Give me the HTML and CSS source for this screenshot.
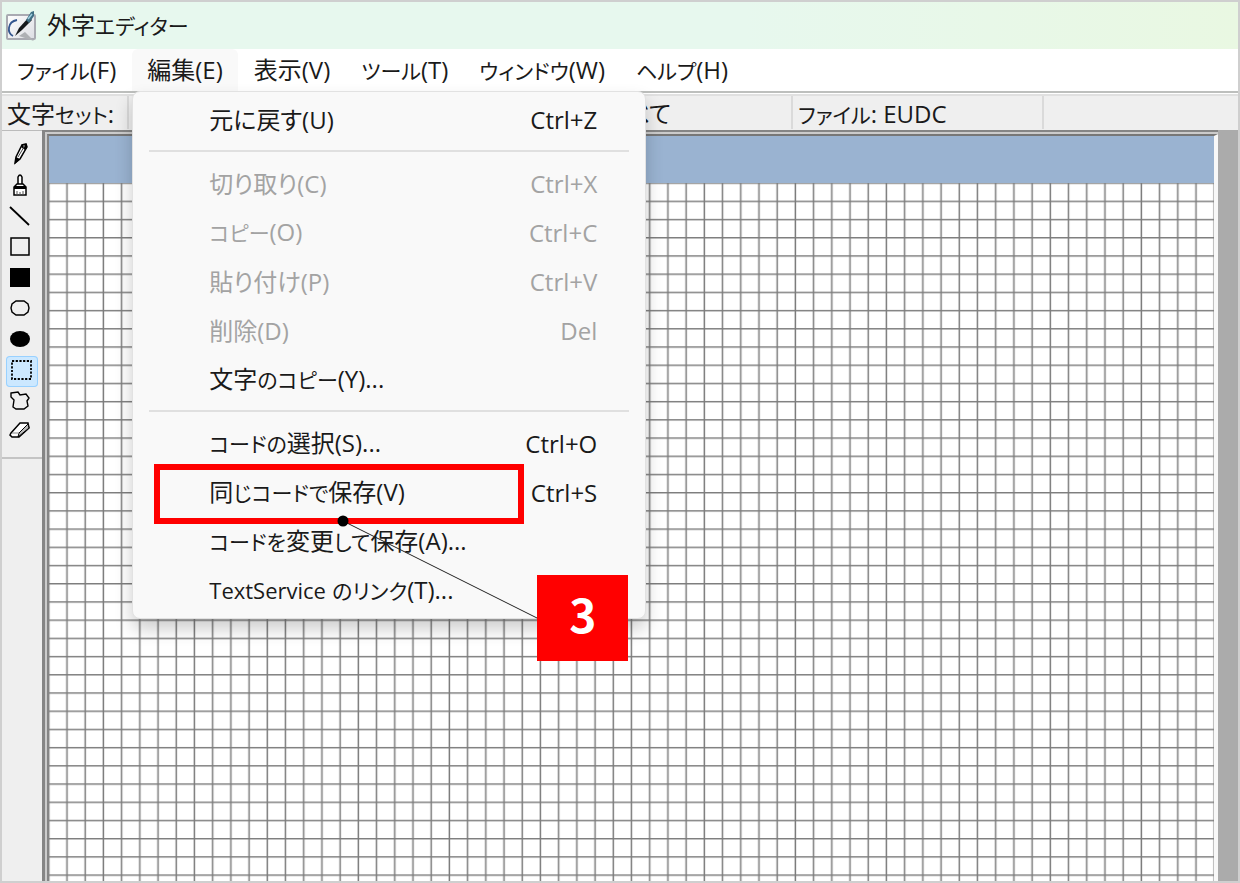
FILE: index.html
```
<!DOCTYPE html>
<html lang="ja">
<head>
    <meta charset="UTF-8">
    <meta name="viewport" content="width=device-width, initial-scale=1.0">
    <title>外字エディター</title>
    <link rel="stylesheet" href="styles.css">
</head>
<body>
    <div class="window">
        <header class="title-bar">
            <svg class="app-icon" width="32" height="32" viewBox="0 0 32 32">
                <defs>
                    <linearGradient id="paper" x1="0" y1="0" x2="1" y2="1">
                        <stop offset="0" stop-color="#ffffff"/>
                        <stop offset="1" stop-color="#dcdde3"/>
                    </linearGradient>
                </defs>
                <rect x="2" y="5" width="28" height="24" rx="1" fill="url(#paper)" stroke="#a9aab2" stroke-width="2"/>
                <path d="M12 10C2 12 2 23 8 26" fill="none" stroke="#34568f" stroke-width="1.8"/>
                <path d="M14 26L29 31L20 22Z" fill="#aeb0b4"/>
                <path d="M10 26L14 18L24 7L27 10L17 20Z" fill="#16191c"/>
                <path d="M21 10L26 2L29 1L29 6L24 13Z" fill="#3f6f83"/>
                <path d="M23 9L27 4" stroke="#9fd0e0" stroke-width="1.5"/>
            </svg>
            <h1>外字<span class="kana">エディター</span></h1>
        </header>

        <nav class="menu-bar">
            <button type="button"><span class="kana">ファイル</span>(F)</button>
            <div class="menu-holder">
                <button type="button" class="open" aria-expanded="true">編集(E)</button>
                <div class="menu">
                    <button type="button"><span>元に戻す(U)</span><kbd>Ctrl+Z</kbd></button>
                    <hr>
                    <button type="button" disabled><span>切り取り(C)</span><kbd>Ctrl+X</kbd></button>
                    <button type="button" disabled><span><span class="kana">コピー</span>(O)</span><kbd>Ctrl+C</kbd></button>
                    <button type="button" disabled><span>貼り付け(P)</span><kbd>Ctrl+V</kbd></button>
                    <button type="button" disabled><span>削除(D)</span><kbd>Del</kbd></button>
                    <button type="button"><span>文字<span class="kana">のコピー</span>(Y)...</span></button>
                    <hr>
                    <button type="button"><span><span class="kana">コードの</span>選択(S)...</span><kbd>Ctrl+O</kbd></button>
                    <button type="button"><span>同<span class="kana">じコードで</span>保存(V)</span><kbd>Ctrl+S</kbd></button>
                    <button type="button"><span><span class="kana">コードを</span>変更<span class="kana">して</span>保存(A)...</span></button>
                    <button type="button"><span><span class="latin">TextService</span> <span class="kana">のリンク</span>(T)...</span></button>
                    <div class="highlight"></div>
                    <svg class="leader" width="202" height="106" viewBox="0 0 202 106">
                        <path d="M6 6L202 104" stroke="#222" stroke-width="1"/>
                        <circle cx="6" cy="6" r="5.5" fill="#000"/>
                    </svg>
                    <div class="step">3</div>
                </div>
            </div>
            <button type="button">表示(V)</button>
            <button type="button"><span class="kana">ツール</span>(T)</button>
            <button type="button"><span class="kana">ウィンドウ</span>(W)</button>
            <button type="button"><span class="kana">ヘルプ</span>(H)</button>
        </nav>

        <div class="info-bar">
            <div class="cell charset">文字<span class="kana">セット</span>:</div>
            <div class="cell code"></div>
            <div class="cell font">すべて</div>
            <div class="cell file"><span class="kana">ファイル</span>: EUDC</div>
        </div>

        <main class="workspace">
            <div class="tools">
                <button type="button" aria-label="鉛筆">
                    <svg viewBox="0 0 32 31">
                        <path d="M9 24L10 18L16 6L20 5L21 8L14 20Z" fill="#fff" stroke="#000" stroke-width="1.5"/>
                        <path d="M9 25L10 18L14 20ZM16 5H21V9L19 11L15 8Z" fill="#000"/>
                        <path d="M18 8L12 18" stroke="#444"/>
                        <path d="M17 7H19" stroke="#aaa"/>
                    </svg>
                </button>
                <button type="button" aria-label="ブラシ">
                    <svg viewBox="0 0 32 31">
                        <path d="M12 15V7Q14 3 16 7V15" fill="#fff" stroke="#000" stroke-width="1.5"/>
                        <path d="M8 25V17L11 14H17L20 17V25Z" fill="#fff" stroke="#000" stroke-width="1.5"/>
                        <path d="M8 16H20V19H8Z"/>
                        <path d="M11 25V21M14 25V22M17 25V21" stroke="#555"/>
                    </svg>
                </button>
                <button type="button" aria-label="直線">
                    <svg viewBox="0 0 32 31"><path d="M4 6L23 24" stroke="#000" stroke-width="1.8"/></svg>
                </button>
                <button type="button" aria-label="四角形">
                    <svg viewBox="0 0 32 31"><rect x="5" y="6" width="18" height="17" fill="none" stroke="#000" stroke-width="1.5"/></svg>
                </button>
                <button type="button" aria-label="塗りつぶし四角形">
                    <svg viewBox="0 0 32 31"><rect x="4" y="5" width="20" height="19"/></svg>
                </button>
                <button type="button" aria-label="円">
                    <svg viewBox="0 0 32 31"><path d="M10 7H18L22 10L23 14L22 18L18 21H10L6 18L5 14L6 10Z" fill="none" stroke="#000" stroke-width="1.4"/></svg>
                </button>
                <button type="button" aria-label="塗りつぶし円">
                    <svg viewBox="0 0 32 31"><ellipse cx="14" cy="14" rx="10" ry="8"/></svg>
                </button>
                <button type="button" class="selected" aria-label="四角形選択" aria-pressed="true">
                    <svg viewBox="0 0 32 31"><rect x="6" y="5" width="19" height="18" fill="none" stroke="#000" stroke-width="1.8" stroke-dasharray="2.2 1.5"/></svg>
                </button>
                <button type="button" aria-label="自由選択">
                    <svg viewBox="0 0 32 31"><path d="M5 6L12 5L14 8L20 7L23 11L21 14L22 19L18 22H10L7 20L8 13L5 10Z" fill="none" stroke="#000" stroke-width="1.4"/></svg>
                </button>
                <button type="button" aria-label="消しゴム">
                    <svg viewBox="0 0 32 31">
                        <path d="M5 15L14 5H22L23 10L13 19H6L4 17Z" fill="#fff" stroke="#000" stroke-width="1.5"/>
                        <path d="M22 6L13 15L12 19L23 10Z" fill="#bbb" stroke="#000" stroke-width="1"/>
                        <path d="M6 15H13" stroke="#888"/>
                    </svg>
                </button>
            </div>
            <div class="editor">
                <div class="glyph-window">
                    <div class="glyph-title"></div>
                    <svg class="grid">
                        <defs>
                            <pattern id="cell" x="9" y="9" width="18.21" height="18.21" patternUnits="userSpaceOnUse">
                                <path d="M9 0V18.21M0 9.4H18.21" stroke="#7c7c7c" stroke-width="1.5"/>
                            </pattern>
                        </defs>
                        <rect width="100%" height="100%" fill="url(#cell)"/>
                    </svg>
                </div>
            </div>
        </main>
    </div>
</body>
</html>
```
FILE: styles.css
```
* {
    box-sizing: border-box;
}
body {
    margin: 0;
    font-family: "Open Sans", "Noto Sans CJK JP", sans-serif;
    font-size: 24px;
    line-height: 32px;
    font-feature-settings: "palt";
    color: #1a1a1a;
    overflow: hidden;
}
button {
    font: inherit;
    font-feature-settings: inherit;
    color: inherit;
    background: none;
    border: none;
    padding: 0;
    white-space: nowrap;
}
.kana {
    font-size: 21px;
}
.latin {
    font-size: 22px;
}
.window {
    display: flex;
    flex-direction: column;
    height: 100vh;
    border: 2px solid #cfcfcf;
    background-color: #efefef;
}
.title-bar {
    display: flex;
    align-items: center;
    gap: 10px;
    height: 47px;
    padding: 0 3px;
    background: linear-gradient(90deg, #e7f8ee 60%, #e9f8e2);
}
.title-bar h1 {
    margin: 0;
    font-size: 24px;
    font-weight: normal;
}
.menu-bar {
    display: flex;
    gap: 1px;
    height: 42px;
    background-color: #fff;
}
.menu-bar > button, .menu-holder > button {
    height: 42px;
    padding: 0 15px;
}
.menu-holder {
    position: relative;
}
.menu-holder > .open {
    background-color: #f9f9f9;
    border-radius: 6px 6px 0 0;
}
.menu {
    position: absolute;
    top: 42px;
    left: 0;
    z-index: 10;
    width: 514px;
    padding: 3px 0;
    background-color: #f9f9f9;
    border: 1px solid #e2e2e2;
    border-radius: 8px;
    box-shadow: 0 10px 18px rgba(0, 0, 0, 0.2);
}
.menu > button {
    display: flex;
    justify-content: space-between;
    align-items: center;
    width: 100%;
    height: 49px;
    padding: 0 48px 0 76px;
}
.menu > button:disabled {
    color: #a3a3a3;
}
.menu kbd {
    font-family: inherit;
}
.menu hr {
    height: 2px;
    margin: 6px 16px 7px;
    border: none;
    background-color: #e0e0e0;
}
.highlight {
    position: absolute;
    top: 372px;
    left: 21px;
    width: 370px;
    height: 60px;
    border: 6px solid #f00;
}
.leader {
    position: absolute;
    top: 423px;
    left: 204px;
}
.step {
    position: absolute;
    top: 483px;
    left: 404px;
    width: 91px;
    height: 86px;
    background-color: #f00;
    color: #fff;
    font-family: "Noto Sans CJK JP", sans-serif;
    font-size: 46px;
    font-weight: bold;
    line-height: 76px;
    text-align: center;
}
.info-bar {
    display: flex;
    height: 39px;
    padding: 3px 0 1px;
    border-top: 2px solid #bdbfbd;
    box-shadow: inset 0 1px #fff, inset 0 3px #e0e0e0;
    line-height: 36px;
}
.cell {
    padding: 0 5px;
    border-right: 2px solid #dadada;
    white-space: nowrap;
}
.charset {
    width: 127px;
}
.code {
    width: 407px;
}
.font {
    width: 257px;
    padding-right: 120px;
    text-align: right;
}
.file {
    width: 251px;
}
.workspace {
    display: flex;
    flex: 1;
    min-height: 0;
}
.tools {
    display: flex;
    flex-direction: column;
    align-self: flex-start;
    width: 40px;
    padding: 8px 4px;
    border-top: 1px solid #bbb;
    border-bottom: 2px solid #c4c4c4;
}
.tools button {
    width: 32px;
    height: 31px;
    border-radius: 4px;
}
.tools svg {
    display: block;
    width: 32px;
    height: 31px;
}
.tools .selected {
    background-color: #cce8ff;
    box-shadow: inset 0 0 0 1px #99d1ff;
}
.editor {
    display: flex;
    flex: 1;
    margin-right: 20px;
    padding: 2px 0 0 2px;
    border: 3px solid #858585;
    border-width: 2px 0 0 3px;
    box-shadow: 20px 0 #ababab;
    background-color: #cbcbcb;
}
.glyph-window {
    display: flex;
    flex: 1;
    flex-direction: column;
    border-style: solid;
    border-width: 2px 4px 0 2px;
    border-color: #777 #f8f8f8 #777 #858585;
    background-color: #fff;
}
.glyph-title {
    height: 47px;
    background-color: #9ab3d1;
}
.grid {
    flex: 1;
    width: 100%;
    min-height: 0;
}
```
